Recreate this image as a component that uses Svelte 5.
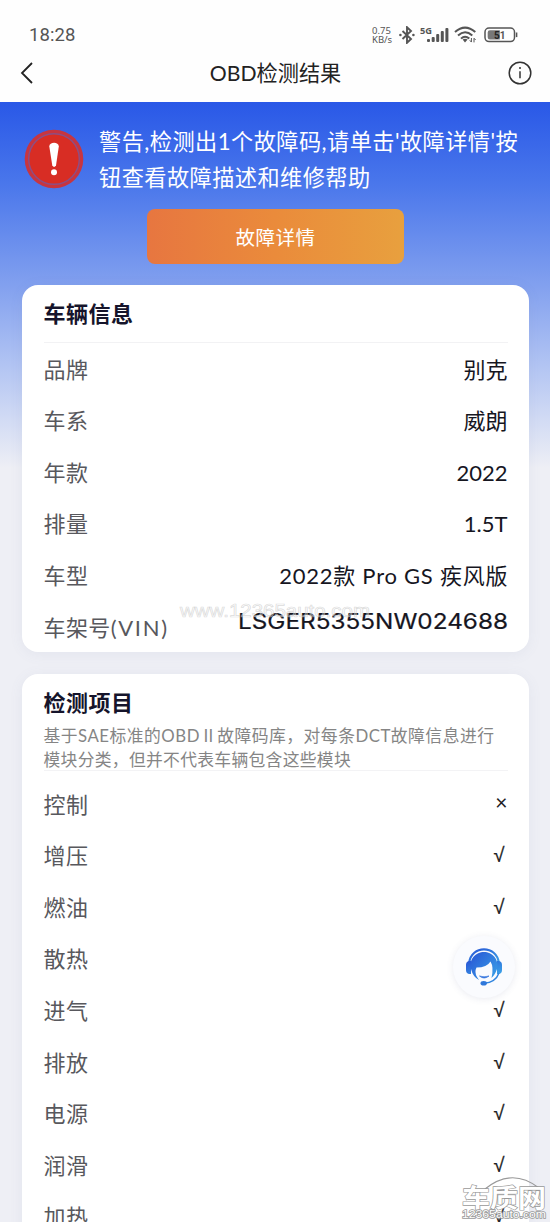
<script>
  const vehicle = [
    { label: '品牌', value: '别克' },
    { label: '车系', value: '威朗' },
    { label: '年款', value: '2022' },
    { label: '排量', value: '1.5T' },
    { label: '车型', value: '2022款 Pro GS 疾风版', wide: true }
  ];
  const vin = 'LSGER5355NW024688';

  const checks = [
    { name: '控制', ok: false },
    { name: '增压', ok: true },
    { name: '燃油', ok: true },
    { name: '散热', ok: true },
    { name: '进气', ok: true },
    { name: '排放', ok: true },
    { name: '电源', ok: true },
    { name: '润滑', ok: true },
    { name: '加热', ok: true }
  ];
</script>

<div class="page">
  <!-- Status bar -->
  <div class="status">
    <span class="time">18:28</span>
    <div class="indicators">
      <div class="speed"><span>0.75</span><span>KB/s</span></div>
      <svg class="bluetooth" width="16" height="18" viewBox="0 0 16 18">
        <path d="M3.5 5 12 13 8 16.8V1.2L12 5 3.5 13" fill="none" stroke="#555" stroke-width="1.9" />
        <circle cx="1.4" cy="9" r="1.3" fill="#555" />
        <circle cx="14.4" cy="9" r="1.3" fill="#555" />
      </svg>
      <svg class="signal" width="29" height="19" viewBox="0 0 29 19">
        <text x="0" y="8.5" textLength="12" lengthAdjust="spacingAndGlyphs">5G</text>
        <g fill="#555">
          <rect x="7" y="14" width="3" height="3" rx="1" />
          <rect x="11.7" y="12" width="3" height="5" rx="1" />
          <rect x="16.2" y="9" width="3" height="8" rx="1" />
          <rect x="20.8" y="6" width="3" height="11" rx="1" />
          <rect x="25.4" y="3" width="3" height="14" rx="1" />
        </g>
      </svg>
      <svg class="wifi" width="23" height="17" viewBox="0 0 23 17">
        <g fill="none" stroke="#555" stroke-width="2">
          <path d="M1 6Q11 -2.8 21.3 6" />
          <path d="M4 9.4Q11 3 18.3 9.4" />
          <path d="M7 12.6Q11 8.8 15.3 12.6" />
        </g>
        <path d="M8.6 13.5Q11 12 13.6 13.5L11 16.4Z" fill="#555" />
        <path d="M17.4 12V16M15.8 14.3l1.6 1.8M20 16.4v-4M21.6 14 20 12.2" stroke="#555" stroke-width="1" fill="none" />
      </svg>
      <svg class="battery" width="34" height="16" viewBox="0 0 34 16">
        <rect x="1" y="1" width="29.5" height="13.6" rx="4" fill="none" stroke="#555" stroke-width="1.5" />
        <path d="M6 3.2h9.8v9.4H6a2.3 2.3 0 0 1-2.3-2.3V5.5A2.3 2.3 0 0 1 6 3.2Z" fill="#777" />
        <path d="M32.6 5.5v4.6" stroke="#555" stroke-width="1.5" />
        <text x="10" y="11.6"><tspan class="five">5</tspan>1</text>
      </svg>
    </div>
  </div>

  <!-- Title bar -->
  <header>
    <svg width="14" height="24" viewBox="0 0 14 24">
      <path d="M12 2 2 12l10 10" fill="none" stroke="#222" stroke-width="1.8" />
    </svg>
    <h1>OBD检测结果</h1>
    <svg width="24" height="24" viewBox="0 0 24 24">
      <circle cx="12" cy="12" r="10.8" fill="none" stroke="#333" stroke-width="1.5" />
      <path d="M12 10.2v7" stroke="#333" stroke-width="1.5" />
      <circle cx="12" cy="7" r="1" fill="#333" />
    </svg>
  </header>

  <main>
    <section class="warning">
      <svg class="alert" width="60" height="60" viewBox="0 0 60 60">
        <circle cx="30" cy="30" r="29.3" fill="#c73540" />
        <circle cx="30" cy="30" r="25.3" fill="#d82d24" stroke="#8c4e85" stroke-width="1.4" />
        <path d="M25.3 17.5C25.3 12.5 34.8 12.5 34.8 17.5L32 36.5Q30 39.3 28.3 36.5Z" fill="#fff" />
        <circle cx="30" cy="43.3" r="3" fill="#fff" />
      </svg>
      <p>警告,检测出1个故障码,请单击'故障详情'按<br />钮查看故障描述和维修帮助</p>
    </section>
    <button>故障详情</button>

    <section class="card info">
      <h2>车辆信息</h2>
      {#each vehicle as item}
        <div class="row">
          <span class="label">{item.label}</span>
          <span class="value" class:wide={item.wide}>{item.value}</span>
        </div>
      {/each}
      <div class="row">
        <span class="label">车架号<span class="latin">(VIN)</span></span>
        <svg class="vin" width="272" height="32" viewBox="0 0 272 32">
          <text x="1" y="23.5" textLength="270" lengthAdjust="spacingAndGlyphs">{vin}</text>
        </svg>
      </div>
      <svg class="watermark" width="194" height="24" viewBox="0 0 194 24">
        <text x="2" y="18" textLength="190" lengthAdjust="spacingAndGlyphs">www.12365auto.com</text>
      </svg>
    </section>

    <section class="card items">
      <h2>检测项目</h2>
      <p class="desc">
        <span class="first">基于SAE标准的OBDⅡ故障码库，对每条DCT故障信息进行</span><br />模块分类，但并不代表车辆包含这些模块
      </p>
      {#each checks as check}
        <div class="row">
          <span class="label">{check.name}</span>
          {#if check.ok}
            <span class="mark ok">√</span>
          {:else}
            <span class="mark">×</span>
          {/if}
        </div>
      {/each}
    </section>
  </main>

  <!-- Floating support button -->
  <div class="support">
    <svg width="38" height="38" viewBox="0 0 38 38">
      <defs>
        <linearGradient id="hair" x1="0" y1="0" x2="1" y2="1">
          <stop offset="0" stop-color="#2855d5" />
          <stop offset="1" stop-color="#3ba4e8" />
        </linearGradient>
      </defs>
      <path d="M4.2 15C6-3.2 32-3.2 33.8 15" fill="none" stroke="url(#hair)" stroke-width="2.2" />
      <path d="M4 13H6V26H4Q1 25.5 1 22V17Q1 13.5 4 13ZM32 13h2q3 .5 3 4v5q0 3.5-3 4h-2Z" fill="url(#hair)" />
      <path d="M6 21C3.5 11 11 4 19 4S34.5 11 32 21Q30 27 26.5 30Q29 19 25.5 13.5Q22 19.5 11.5 19.5Q9.2 24 12 29L14 32Q8 29 6 21Z" fill="url(#hair)" />
      <path d="M14.5 28Q19 32 24 28Q19 29.7 14.5 28Z" fill="#2f71dd" stroke="#2f71dd" stroke-width=".7" />
      <path d="M34 25Q30.5 34.5 19 35.3" fill="none" stroke="#3185df" stroke-width="1.5" />
      <ellipse cx="18.7" cy="35.2" rx="3.2" ry="2.3" fill="#2f78db" />
    </svg>
  </div>

  <!-- Site stamp -->
  <svg class="stamp" width="92" height="52" viewBox="0 0 92 52">
    <path d="M27 19Q54-3 81 18" fill="none" stroke="#999" stroke-width="1.2" />
    <text x="4" y="37" class="name" textLength="84" lengthAdjust="spacingAndGlyphs">车质网</text>
    <text x="4" y="48" class="url" textLength="84" lengthAdjust="spacingAndGlyphs">12365auto.com</text>
  </svg>
</div>

<style>
  :global(body) {
    margin: 0;
  }
  .page {
    position: relative;
    width: 550px;
    height: 1222px;
    overflow: hidden;
    background: #fefefe;
    font-family: Lato, 'Noto Sans CJK SC', sans-serif;
  }
  .status {
    display: flex;
    justify-content: space-between;
    align-items: center;
    height: 48px;
    padding: 21px 32px 0 29px;
    box-sizing: border-box;
    color: #555;
  }
  .time {
    font-family: Roboto, sans-serif;
    font-size: 18.5px;
    letter-spacing: 0.1px;
  }
  .indicators {
    display: flex;
    align-items: center;
  }
  .speed {
    display: flex;
    flex-direction: column;
    width: 27px;
    font: 9.5px/9px 'Noto Sans', sans-serif;
  }
  .signal {
    margin-left: 5px;
  }
  .signal text {
    font: bold 9px 'Noto Sans', sans-serif;
    fill: #555;
  }
  .wifi {
    margin-left: 5px;
  }
  .battery {
    margin-left: 7px;
  }
  .battery text {
    font: bold 10px Roboto, sans-serif;
    fill: #555;
  }
  .battery .five {
    fill: #222;
  }
  header {
    display: flex;
    justify-content: space-between;
    align-items: center;
    height: 54px;
    padding: 0 18px 5px 20px;
    box-sizing: border-box;
  }
  h1 {
    margin: 0;
    padding-left: 9px;
    font-size: 21.2px;
    font-weight: 400;
    line-height: 30px;
    color: #222;
  }
  main {
    height: 1120px;
    padding: 0 21px 0 22px;
    overflow: hidden;
    background: linear-gradient(#2958e7 0, #4976eb 80px, #83a1ef 185px, #b3c5f3 265px, #eeeff5 366px, #eeeff5 100%);
  }
  .warning {
    display: flex;
    gap: 15px;
    height: 107px;
    padding: 22px 0 0 2px;
    box-sizing: border-box;
  }
  .alert {
    flex: none;
    margin-top: 5px;
  }
  .warning p {
    margin: 0;
    font-size: 22.2px;
    line-height: 36px;
    letter-spacing: 0.45px;
    white-space: nowrap;
    color: #fff;
  }
  button {
    display: block;
    width: 257px;
    height: 55px;
    margin: 0 0 0 125px;
    padding: 0;
    border: 0;
    border-radius: 8px;
    background: linear-gradient(90deg, #e77640, #ea8b3b 50%, #e8a03e);
    color: #fff;
    font-family: inherit;
    font-size: 19.5px;
    letter-spacing: 0.5px;
  }
  .card {
    position: relative;
    padding: 0 21.5px;
    border-radius: 16px;
    background: #fff;
    box-shadow: 0 2px 14px rgba(100, 110, 150, 0.08);
  }
  .info {
    height: 367px;
    margin-top: 21px;
  }
  .items {
    height: 700px;
    margin-top: 22px;
  }
  h2 {
    margin: 0;
    font-size: 22px;
    letter-spacing: 0.5px;
    font-weight: 700;
    line-height: 57px;
    color: #15142b;
  }
  .info h2 {
    margin-bottom: 1px;
    border-bottom: 1px solid #f2f2f4;
  }
  .items h2 {
    height: 50px;
  }
  .desc {
    height: 46px;
    margin: 0 0 8px;
    border-bottom: 1px solid #f3f3f5;
    font-size: 16.8px;
    line-height: 23.5px;
    letter-spacing: 0.3px;
    white-space: nowrap;
    color: #858585;
  }
  .first {
    letter-spacing: 0.5px;
  }
  .row {
    display: flex;
    justify-content: space-between;
    align-items: center;
    height: 51.55px;
    font-size: 22px;
    line-height: 32px;
  }
  .label {
    letter-spacing: 0.4px;
    color: #58585d;
  }
  .latin {
    letter-spacing: 1.7px;
  }
  .value {
    color: #16161f;
  }
  .wide {
    margin-right: -0.7px;
    letter-spacing: 0.75px;
  }
  .vin {
    position: relative;
    top: -7px;
    margin-right: -1px;
  }
  .vin text {
    font: 400 22px Inter, sans-serif;
    fill: #16161f;
    stroke: #16161f;
    stroke-width: 0.2;
  }
  .watermark {
    position: absolute;
    left: 156px;
    top: 314px;
  }
  .watermark text {
    font: 18.5px 'Liberation Sans', sans-serif;
    fill: rgba(255, 255, 255, 0.3);
    stroke: rgba(200, 200, 200, 0.65);
    stroke-width: 0.7;
  }
  .mark {
    position: relative;
    top: -3px;
    font-size: 21px;
    color: #1c1c22;
  }
  .ok {
    top: -1px;
    padding-right: 3px;
    font-family: 'Liberation Sans', Arial, sans-serif;
    font-size: 20px;
    -webkit-text-stroke: 0.3px #1c1c22;
  }
  .support {
    position: absolute;
    left: 453px;
    top: 936px;
    display: flex;
    justify-content: center;
    align-items: center;
    width: 62px;
    height: 62px;
    border-radius: 50%;
    background: #fafbfe;
    box-shadow: 0 1px 7px rgba(80, 90, 140, 0.12);
  }
  .stamp {
    position: absolute;
    right: 0;
    bottom: 0;
  }
  .stamp text {
    fill: #fff;
    stroke: #999;
    stroke-width: 1.3;
    paint-order: stroke;
  }
  .name {
    font: bold 25px 'Noto Sans CJK SC', sans-serif;
  }
  .stamp .url {
    font: 11.5px 'Liberation Sans', sans-serif;
    stroke-width: 1.6;
  }
</style>
